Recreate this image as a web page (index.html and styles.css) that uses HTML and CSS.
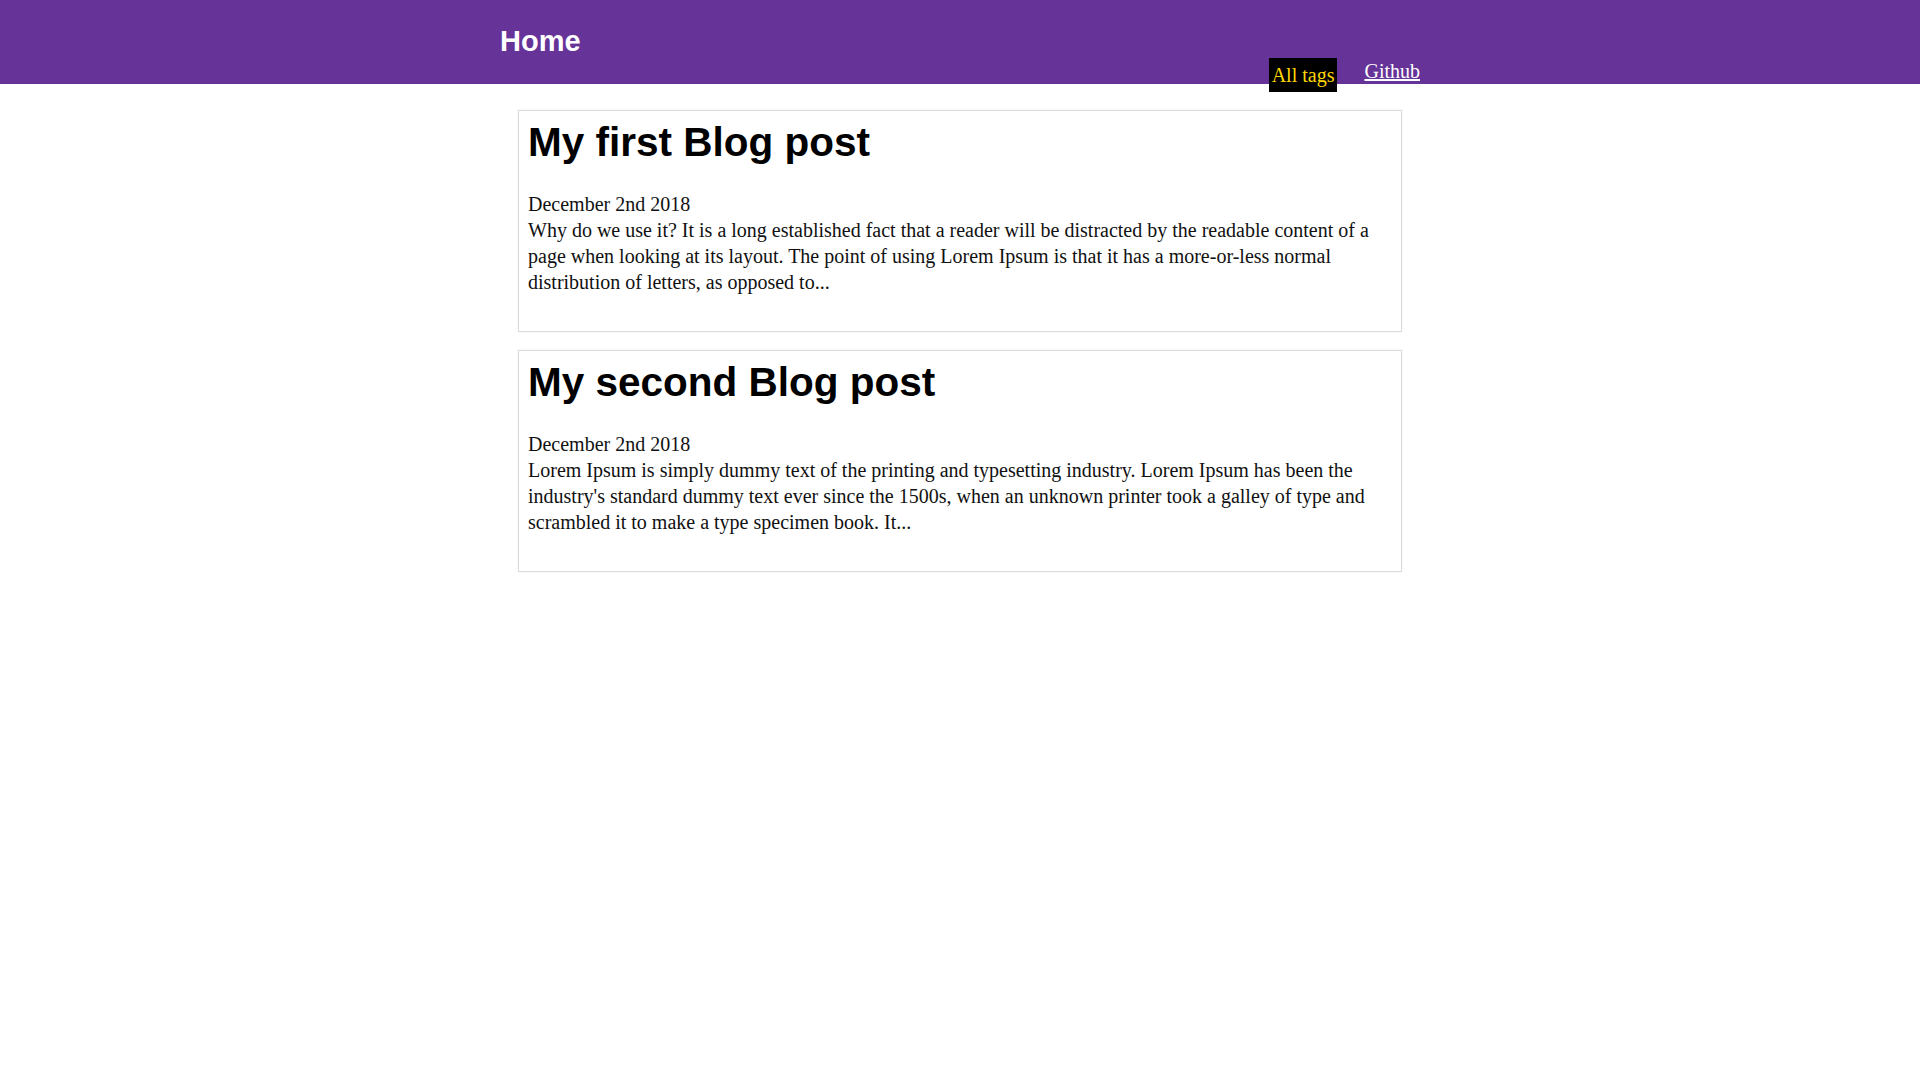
FILE: index.html
```html
<!DOCTYPE html>
<html lang="en">
<head>
<meta charset="utf-8">
<title>Home</title>
<link rel="stylesheet" href="styles.css">
</head>
<body>
<header class="site-header">
  <div class="header-inner">
    <h1 class="site-title"><a href="#">Home</a></h1>
    <nav class="site-nav">
      <a class="nav-tags" href="#">All tags</a>
      <a class="nav-github" href="#">Github</a>
    </nav>
  </div>
</header>
<main class="content">
  <article class="post-card">
    <h2 class="post-title">My first Blog post</h2>
    <div class="post-date">December 2nd 2018</div>
    <p class="post-excerpt">Why do we use it? It is a long established fact that a reader will be distracted by the readable content of a page when looking at its layout. The point of using Lorem Ipsum is that it has a more-or-less normal distribution of letters, as opposed to...</p>
  </article>
  <article class="post-card">
    <h2 class="post-title">My second Blog post</h2>
    <div class="post-date">December 2nd 2018</div>
    <p class="post-excerpt">Lorem Ipsum is simply dummy text of the printing and typesetting industry. Lorem Ipsum has been the industry's standard dummy text ever since the 1500s, when an unknown printer took a galley of type and scrambled it to make a type specimen book. It...</p>
  </article>
</main>
</body>
</html>
```
FILE: styles.css
```css
html, body {
  margin: 0;
  padding: 0;
  background: #ffffff;
}

body {
  font-family: "Liberation Serif", "DejaVu Serif", serif;
  font-size: 20px;
  line-height: 26px;
  color: #111111;
}

.site-header {
  background: #663399;
  height: 84px;
}

.header-inner {
  width: 920px;
  margin: 0 auto;
  display: flex;
  justify-content: space-between;
  align-items: flex-start;
}

.site-title {
  margin: 25px 0 0;
  font-family: "Liberation Sans", Arial, sans-serif;
  font-size: 29px;
  font-weight: bold;
  line-height: normal;
}

.site-title a {
  color: #ffffff;
  text-decoration: none;
}

.site-nav {
  display: flex;
  align-items: flex-start;
  gap: 27px;
  margin-top: 58px;
}

.nav-tags {
  display: block;
  background: #000000;
  color: #ffd700;
  text-decoration: none;
  padding: 4px 3px;
}

.nav-github {
  display: block;
  color: #ffffff;
  text-decoration: underline;
}

.content {
  width: 884px;
  margin: 0 auto;
  padding-top: 26px;
}

.post-card {
  border: 1px solid #dcdcdc;
  box-shadow: 0 0 2px rgba(0, 0, 0, 0.08);
  padding: 8px 9px 9px;
  margin-bottom: 18px;
}

.post-title {
  margin: 0 0 26px;
  font-family: "Liberation Sans", Arial, sans-serif;
  font-size: 40.5px;
  font-weight: bold;
  line-height: 46px;
  color: #000000;
}

.post-date {
  margin: 0;
}

.post-excerpt {
  margin: 0 0 27px;
}
```
